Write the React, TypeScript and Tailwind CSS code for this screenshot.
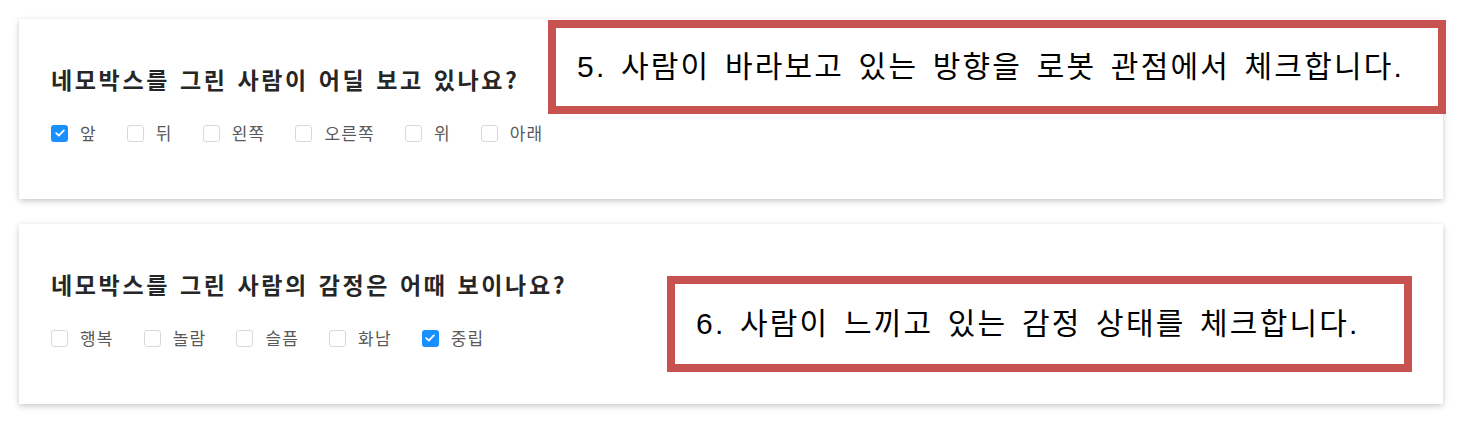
import React from "react";

type Option = { label: string; checked?: boolean };

const Box = ({ checked }: { checked?: boolean }) =>
    checked ? (
        <span className="flex h-[17px] w-[17px] items-center justify-center rounded-[3px] bg-[#1890ff]">
            <svg width="10" height="8" viewBox="0 0 10 8" fill="none">
                <path d="M1.2 4.2L3.8 6.6L8.8 1.4" stroke="white" strokeWidth="1.8" strokeLinecap="round" strokeLinejoin="round"/>
            </svg>
        </span>
    ) : (
        <span className="h-[17px] w-[17px] rounded-[3px] border border-[#d9d9d9] bg-white"/>
    );

const Question = ({title, options}: { title: string; options: Option[] }) => (
    <div className="flex h-[180px] w-[1424px] flex-col bg-white pl-[32px] pt-[45px] shadow-[0_2px_6px_rgba(0,0,0,0.22)]">
        <h2 className="text-[23px] font-bold leading-[30px] tracking-[2.65px] [word-spacing:2px] text-[#262626]">{title}</h2>
        <div className="mt-[29px] flex items-center gap-[30px]">
            {options.map((o) => (
                <label key={o.label} className="flex items-center gap-[12px] text-[17px] leading-5 tracking-[1.2px] text-[#595959]">
                    <Box checked={o.checked}/>
                    <span>{o.label}</span>
                </label>
            ))}
        </div>
    </div>
);

const Note = ({children, className}: { children: React.ReactNode; className: string }) => (
    <div className={`absolute flex items-center border-[8px] border-[#c85250] bg-white pl-[21px] text-[30px] leading-none tracking-[2.2px] [word-spacing:4px] text-black ${className}`}
         style={{fontFamily: '"Liberation Sans", "Noto Sans CJK KR", sans-serif'}}>
        {children}
    </div>
);

export default function App() {
    return (
        <div className="relative h-[425px] w-[1464px] bg-white"
             style={{fontFamily: '"Noto Sans CJK KR", "Noto Sans", sans-serif'}}>
            <div className="flex flex-col gap-[25px] pl-[19px] pt-[19px]">
                <Question
                    title="네모박스를 그린 사람이 어딜 보고 있나요?"
                    options={[
                        {label: "앞", checked: true},
                        {label: "뒤"},
                        {label: "왼쪽"},
                        {label: "오른쪽"},
                        {label: "위"},
                        {label: "아래"},
                    ]}
                />
                <Question
                    title="네모박스를 그린 사람의 감정은 어때 보이나요?"
                    options={[
                        {label: "행복"},
                        {label: "놀람"},
                        {label: "슬픔"},
                        {label: "화남"},
                        {label: "중립", checked: true},
                    ]}
                />
            </div>
            <Note className="left-[548px] top-[20px] h-[94px] w-[898px]">
                5. 사람이 바라보고 있는 방향을 로봇 관점에서 체크합니다.
            </Note>
            <Note className="left-[667px] top-[276px] h-[96px] w-[745px]">
                6. 사람이 느끼고 있는 감정 상태를 체크합니다.
            </Note>
        </div>
    );
}
